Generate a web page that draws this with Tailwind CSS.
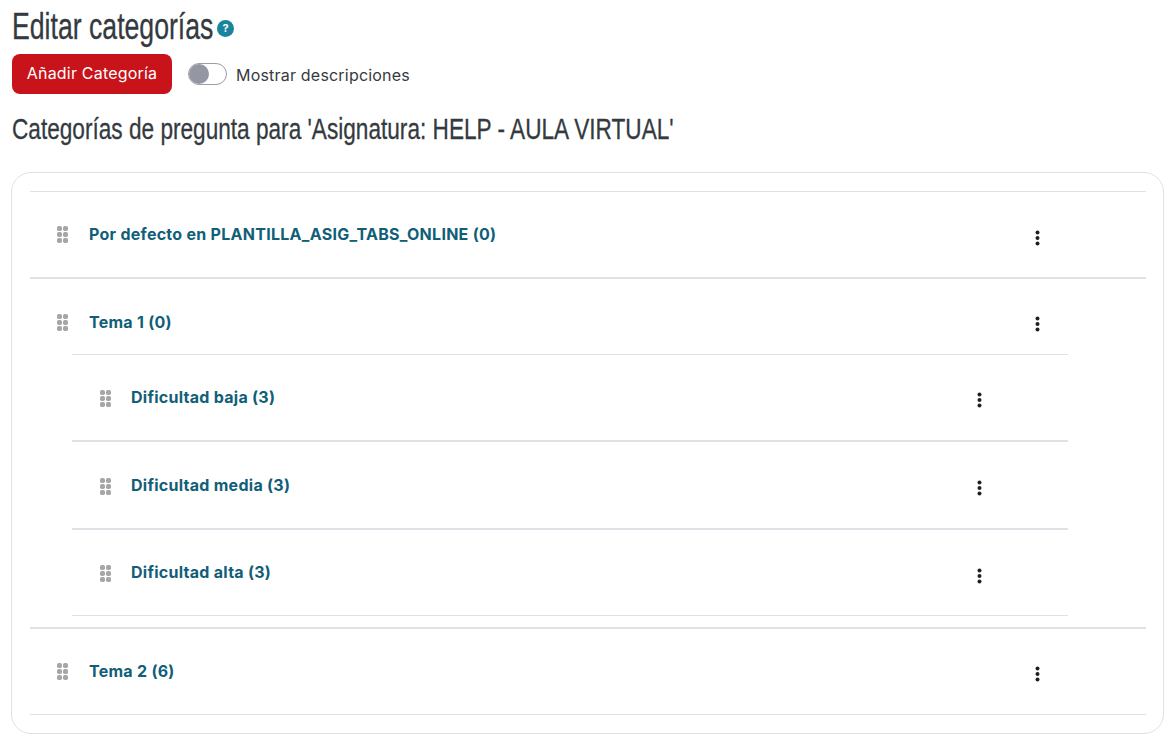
<!DOCTYPE html>
<html lang="es">
<head>
  <meta charset="UTF-8">
  <title>Editar categorías</title>
  <script src="https://cdn.jsdelivr.net/npm/@tailwindcss/browser@4"></script>
</head>
<body class="bg-white text-[#343a40] font-['Inter','Liberation_Sans',sans-serif] overflow-hidden">
  <div class="h-[745px] pl-[12px] pr-[10px]">
    <div class="flex items-center h-[54px]">
      <div class="w-[202px]">
        <h1 class="font-['Liberation_Sans','Arial',sans-serif] text-[36px] leading-[54px] text-[#343a40] whitespace-nowrap w-max origin-left scale-x-[0.74] [-webkit-text-stroke:0.3px_#343a40]">Editar categorías</h1>
      </div>
      <span class="ml-[3px] mt-[3px] w-[17px] h-[17px] rounded-full bg-[#1a849c] text-white text-[11px] font-bold flex items-center justify-center">?</span>
    </div>

    <div class="flex items-center h-[40px]">
      <button class="w-[160px] h-[40px] pb-[2px] rounded-lg bg-[#c8131b] text-white text-[16px] tracking-[0.2px]">Añadir Categoría</button>
      <span class="ml-[16px] w-[39px] h-[22px] rounded-full border border-[#9a9ca8] bg-white flex items-center">
        <span class="w-[20px] h-[20px] rounded-full bg-[#9496a2]"></span>
      </span>
      <span class="ml-[9px] mt-[2px] text-[16px] text-[#343a40] tracking-[0.2px]">Mostrar descripciones</span>
    </div>

    <h2 class="mt-[15px] h-[42px] font-['Liberation_Sans','Arial',sans-serif] text-[30px] leading-[40px] text-[#343a40] whitespace-nowrap w-max origin-left scale-x-[0.754] [-webkit-text-stroke:0.3px_#343a40]">Categorías de pregunta para 'Asignatura: HELP - AULA VIRTUAL'</h2>

    <div class="-ml-[1px] mt-[21px] h-[562px] border border-[#dee2e6] rounded-[20px] pl-[18px] pr-[17px] pt-[18px]">
      <div class="border-t border-[#dee2e6]">
        <div class="h-[85px] border-b-2 border-[#dee2e6] box-content flex pl-[27px] pr-[106px]">
          <div class="flex items-center w-full h-[85px]">
            <svg class="w-[11px] h-[17px] fill-[#a6a6a6]" viewBox="0 0 11 17"><rect x="0" y="0" width="5" height="5" rx="1.8"/><rect x="6" y="0" width="5" height="5" rx="1.8"/><rect x="0" y="6" width="5" height="5" rx="1.8"/><rect x="6" y="6" width="5" height="5" rx="1.8"/><rect x="0" y="12" width="5" height="5" rx="1.8"/><rect x="6" y="12" width="5" height="5" rx="1.8"/></svg>
            <a class="ml-[21px] -mt-[2px] text-[16px] font-bold tracking-[0.27px] text-[#115e78]">Por defecto en PLANTILLA_ASIG_TABS_ONLINE (0)</a>
            <svg class="ml-auto mt-[6px] w-[5px] h-[16px] fill-[#1d2125]" viewBox="0 0 5 16"><circle cx="2.5" cy="2.5" r="2"/><circle cx="2.5" cy="8" r="2"/><circle cx="2.5" cy="13.5" r="2"/></svg>
          </div>
        </div>

        <div class="border-b-2 border-[#dee2e6]">
          <div class="h-[75px] flex items-center pl-[27px] pr-[106px] pt-[12px]">
            <svg class="w-[11px] h-[17px] fill-[#a6a6a6]" viewBox="0 0 11 17"><rect x="0" y="0" width="5" height="5" rx="1.8"/><rect x="6" y="0" width="5" height="5" rx="1.8"/><rect x="0" y="6" width="5" height="5" rx="1.8"/><rect x="6" y="6" width="5" height="5" rx="1.8"/><rect x="0" y="12" width="5" height="5" rx="1.8"/><rect x="6" y="12" width="5" height="5" rx="1.8"/></svg>
            <a class="ml-[21px] -mt-[2px] text-[16px] font-bold tracking-[0.27px] text-[#115e78]">Tema 1 (0)</a>
            <svg class="ml-auto mt-[3px] w-[5px] h-[16px] fill-[#1d2125]" viewBox="0 0 5 16"><circle cx="2.5" cy="2.5" r="2"/><circle cx="2.5" cy="8" r="2"/><circle cx="2.5" cy="13.5" r="2"/></svg>
          </div>
          <div class="ml-[42px] mr-[78px] mb-[11px] border-t border-[#dee2e6]">
            <div class="h-[87px] border-b-2 border-[#dee2e6] flex items-center pl-[28px] pr-[86px] pt-[2px]">
              <svg class="w-[11px] h-[17px] fill-[#a6a6a6]" viewBox="0 0 11 17"><rect x="0" y="0" width="5" height="5" rx="1.8"/><rect x="6" y="0" width="5" height="5" rx="1.8"/><rect x="0" y="6" width="5" height="5" rx="1.8"/><rect x="6" y="6" width="5" height="5" rx="1.8"/><rect x="0" y="12" width="5" height="5" rx="1.8"/><rect x="6" y="12" width="5" height="5" rx="1.8"/></svg>
              <a class="ml-[20px] -mt-[3px] text-[16px] font-bold tracking-[0.27px] text-[#115e78]">Dificultad baja (3)</a>
              <svg class="ml-auto mt-[3px] w-[5px] h-[16px] fill-[#1d2125]" viewBox="0 0 5 16"><circle cx="2.5" cy="2.5" r="2"/><circle cx="2.5" cy="8" r="2"/><circle cx="2.5" cy="13.5" r="2"/></svg>
            </div>
            <div class="h-[88px] border-b-2 border-[#dee2e6] flex items-center pl-[28px] pr-[86px] pt-[2px]">
              <svg class="w-[11px] h-[17px] fill-[#a6a6a6]" viewBox="0 0 11 17"><rect x="0" y="0" width="5" height="5" rx="1.8"/><rect x="6" y="0" width="5" height="5" rx="1.8"/><rect x="0" y="6" width="5" height="5" rx="1.8"/><rect x="6" y="6" width="5" height="5" rx="1.8"/><rect x="0" y="12" width="5" height="5" rx="1.8"/><rect x="6" y="12" width="5" height="5" rx="1.8"/></svg>
              <a class="ml-[20px] -mt-[2px] text-[16px] font-bold tracking-[0.27px] text-[#115e78]">Dificultad media (3)</a>
              <svg class="ml-auto mt-[4px] w-[5px] h-[16px] fill-[#1d2125]" viewBox="0 0 5 16"><circle cx="2.5" cy="2.5" r="2"/><circle cx="2.5" cy="8" r="2"/><circle cx="2.5" cy="13.5" r="2"/></svg>
            </div>
            <div class="h-[86px] border-b border-[#dee2e6] flex items-center pl-[28px] pr-[86px] pt-[1px]">
              <svg class="w-[11px] h-[17px] fill-[#a6a6a6]" viewBox="0 0 11 17"><rect x="0" y="0" width="5" height="5" rx="1.8"/><rect x="6" y="0" width="5" height="5" rx="1.8"/><rect x="0" y="6" width="5" height="5" rx="1.8"/><rect x="6" y="6" width="5" height="5" rx="1.8"/><rect x="0" y="12" width="5" height="5" rx="1.8"/><rect x="6" y="12" width="5" height="5" rx="1.8"/></svg>
              <a class="ml-[20px] -mt-[2px] text-[16px] font-bold tracking-[0.27px] text-[#115e78]">Dificultad alta (3)</a>
              <svg class="ml-auto mt-[5px] w-[5px] h-[16px] fill-[#1d2125]" viewBox="0 0 5 16"><circle cx="2.5" cy="2.5" r="2"/><circle cx="2.5" cy="8" r="2"/><circle cx="2.5" cy="13.5" r="2"/></svg>
            </div>
          </div>
        </div>

        <div class="h-[86px] border-b border-[#dee2e6] flex items-center pl-[27px] pr-[106px]">
          <svg class="w-[11px] h-[17px] fill-[#a6a6a6]" viewBox="0 0 11 17"><rect x="0" y="0" width="5" height="5" rx="1.8"/><rect x="6" y="0" width="5" height="5" rx="1.8"/><rect x="0" y="6" width="5" height="5" rx="1.8"/><rect x="6" y="6" width="5" height="5" rx="1.8"/><rect x="0" y="12" width="5" height="5" rx="1.8"/><rect x="6" y="12" width="5" height="5" rx="1.8"/></svg>
          <a class="ml-[21px] -mt-[2px] text-[16px] font-bold tracking-[0.27px] text-[#115e78]">Tema 2 (6)</a>
          <svg class="ml-auto mt-[5px] w-[5px] h-[16px] fill-[#1d2125]" viewBox="0 0 5 16"><circle cx="2.5" cy="2.5" r="2"/><circle cx="2.5" cy="8" r="2"/><circle cx="2.5" cy="13.5" r="2"/></svg>
        </div>
      </div>
    </div>
  </div>
</body>
</html>
